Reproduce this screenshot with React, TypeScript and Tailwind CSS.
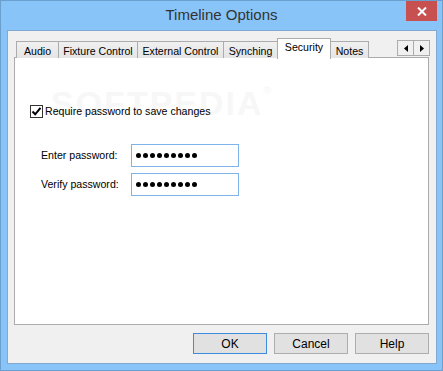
import React from "react";

const font = { fontFamily: '"Liberation Sans", Arial, sans-serif' };

function Dots() {
  return (
    <div className="flex gap-[2px] items-center">
      {Array.from({ length: 9 }).map((_, i) => (
        <div key={i} className="w-[5px] h-[5px] rounded-full bg-black" />
      ))}
    </div>
  );
}

export default function App() {
  const tabs = [
    { label: "Audio", w: "w-[43px]" },
    { label: "Fixture Control", w: "w-[80px]" },
    { label: "External Control", w: "w-[87px]" },
    { label: "Synching", w: "w-[55px]" },
  ];
  return (
    <div
      className="w-[443px] h-[371px] bg-[#88c4f8] border border-[#6b9fd0] flex flex-col text-[10.6px] text-black overflow-hidden"
      style={font}
    >
      {/* Title bar */}
      <div className="relative h-[29px] flex items-center justify-center shrink-0">
        <span className="text-[15px] text-[#333333] -mt-[1px]">Timeline Options</span>
        <div className="absolute right-[5px] top-0 w-[31px] h-[20px] bg-[#c75050] flex items-center justify-center">
          <svg width="10" height="9" viewBox="0 0 10 9">
            <path d="M1 0.5 L9 8.5 M9 0.5 L1 8.5" stroke="white" strokeWidth="2" />
          </svg>
        </div>
      </div>
      {/* Client */}
      <div className="mx-[6px] mr-[5px] mb-[6px] flex-1 border border-[#7fa9d0] bg-[#f0f0f0] flex flex-col pl-[6px] pr-[7px] pt-[6px]">
        {/* Tabs header */}
        <div className="flex items-end h-[21px] pl-[2px] pr-0 relative z-10">
          {tabs.map((t, i) => (
            <div
              key={t.label}
              className={`${t.w} h-[17px] ${i > 0 ? "-ml-px" : ""} border border-b-0 border-[#acacac] bg-gradient-to-b from-[#f0f0f0] to-[#e5e5e5] flex items-center justify-center leading-none pt-[2px]`}
            >
              {t.label}
            </div>
          ))}
          <div className="w-[54px] h-[21px] -ml-px -mb-px border border-b-0 border-[#acacac] bg-white flex items-center justify-center leading-none pb-[3px]">
            Security
          </div>
          <div className="w-[39px] h-[17px] -ml-px border border-b-0 border-[#acacac] bg-gradient-to-b from-[#f0f0f0] to-[#e5e5e5] flex items-center justify-center leading-none pt-[2px]">
            Notes
          </div>
          <div className="ml-auto mb-[2px] -mr-px flex">
            <div className="w-[17px] h-[16px] border border-[#acacac] bg-[#f0f0f0] flex items-center justify-center">
              <svg width="4" height="7" viewBox="0 0 4 7">
                <path d="M4 0 L0 3.5 L4 7 Z" fill="black" />
              </svg>
            </div>
            <div className="w-[17px] h-[16px] -ml-px border border-[#acacac] bg-[#f0f0f0] flex items-center justify-center">
              <svg width="4" height="7" viewBox="0 0 4 7">
                <path d="M0 0 L4 3.5 L0 7 Z" fill="black" />
              </svg>
            </div>
          </div>
        </div>
        {/* Panel */}
        <div className="relative h-[268px] border border-[#acacac] bg-white -mt-px pt-[47px]">
          <div
            className="absolute left-[36px] top-[28px] text-[34px] font-bold tracking-[2px] text-[#f7f7f7] leading-none select-none"
          >
            SOFTPEDIA<span className="text-[10px] align-top">®</span>
          </div>
          <div className="relative flex items-center pl-[15px] gap-[2px]">
            <div className="w-[13px] h-[13px] border border-[#333333] bg-white flex items-center justify-center">
              <svg width="11" height="11" viewBox="0 0 11 11">
                <path d="M1.5 5.5 L4.2 8.3 L9.5 1.8" stroke="black" strokeWidth="2" fill="none" />
              </svg>
            </div>
            <span className="leading-none">Require password to save changes</span>
          </div>
          <div className="relative flex flex-col gap-[6px] mt-[26px] pl-[26px]">
            <div className="flex items-center">
              <span className="w-[90px] leading-none">Enter password:</span>
              <div className="w-[108px] h-[23px] border border-[#7eb4ea] bg-white flex items-center pl-[4px]">
                <Dots />
              </div>
            </div>
            <div className="flex items-center">
              <span className="w-[90px] leading-none">Verify password:</span>
              <div className="w-[108px] h-[23px] border border-[#7eb4ea] bg-white flex items-center pl-[4px]">
                <Dots />
              </div>
            </div>
          </div>
        </div>
        {/* Buttons */}
        <div className="flex justify-end gap-[7px] mt-[8px]">
          <div className="w-[74px] h-[21px] border border-[#3c8de0] bg-[#e1e1e1] flex items-center justify-center text-[12px]">
            OK
          </div>
          <div className="w-[74px] h-[21px] border border-[#adadad] bg-[#e1e1e1] flex items-center justify-center text-[12px]">
            Cancel
          </div>
          <div className="w-[74px] h-[21px] border border-[#adadad] bg-[#e1e1e1] flex items-center justify-center text-[12px]">
            Help
          </div>
        </div>
      </div>
    </div>
  );
}
